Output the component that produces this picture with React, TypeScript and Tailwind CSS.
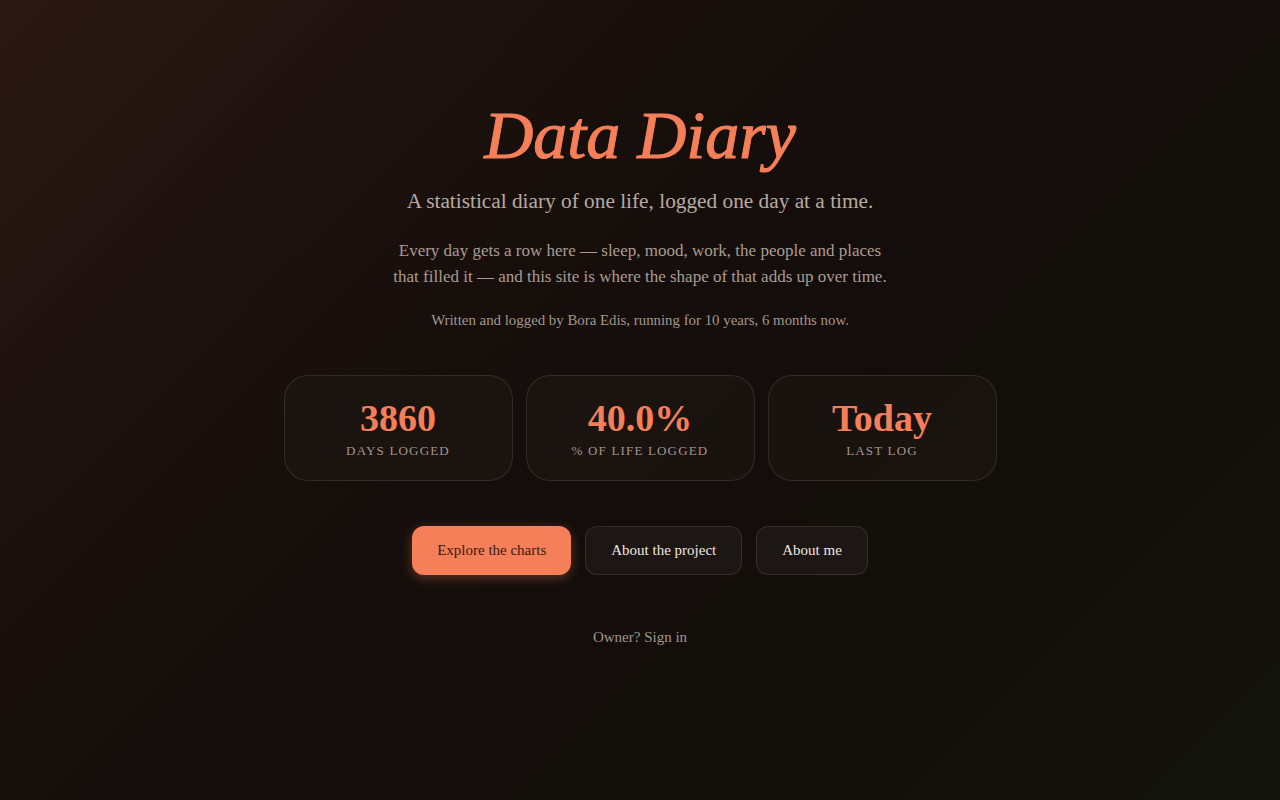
const stats = [
  { value: '3860', label: 'Days logged' },
  { value: '40.0%', label: '% of life logged' },
  { value: 'Today', label: 'Last log' },
]

function StatCard({ value, label }: { value: string; label: string }) {
  return (
    <div className="w-[229px] h-[106px] rounded-3xl border border-white/10 bg-[#1b1512]/80 pt-5 flex flex-col items-center">
      <div className="text-[38px] leading-[44px] font-bold text-[#f47f58]">{value}</div>
      <div className="mt-0.5 text-[13px] leading-[18px] uppercase tracking-[0.09em] text-[#a3958b]">{label}</div>
    </div>
  )
}

export default function App() {
  return (
    <main className="min-h-screen w-full bg-[linear-gradient(135deg,#2a1812_0%,#170f0c_35%,#130d0b_55%,#121009_80%,#13150e_100%)] font-['Liberation_Serif','Times_New_Roman',serif]">
      <section className="flex flex-col items-center pt-[99px] text-center">
        <h1 className="text-[68px] leading-[72px] italic [-webkit-text-stroke:1.1px_#f47f58] text-[#f47f58]">Data Diary</h1>
        <p className="mt-[16px] text-[21.3px] leading-7 text-[#b8aaa0]">
          A statistical diary of one life, logged one day at a time.
        </p>
        <p className="mt-[23px] max-w-[520px] text-[17px] leading-[26px] text-[#aa9c92]">
          Every day gets a row here — sleep, mood, work, the people and places
          <br />
          that filled it — and this site is where the shape of that adds up over time.
        </p>
        <p className="mt-[19px] text-[14.85px] leading-[22px] text-[#a3968c]">
          Written and logged by Bora Edis, running for 10 years, 6 months now.
        </p>

        <div className="mt-[44px] flex gap-[13px]">
          {stats.map((s) => (
            <StatCard key={s.label} value={s.value} label={s.label} />
          ))}
        </div>

        <div className="mt-[45px] flex gap-[14px]">
          <button
            type="button"
            className="h-[49px] px-[25px] rounded-xl bg-[#f47f58] text-[15px] text-[#3b1a0f] shadow-[0_3px_12px_rgba(244,127,88,0.35)]"
          >
            Explore the charts
          </button>
          <button
            type="button"
            className="h-[49px] px-[25px] rounded-xl border border-white/10 bg-[#1c1714] text-[15px] text-[#efe6de]"
          >
            About the project
          </button>
          <button
            type="button"
            className="h-[49px] px-[25px] rounded-xl border border-white/10 bg-[#1c1714] text-[15px] text-[#efe6de]"
          >
            About me
          </button>
        </div>

        <a href="#" className="mt-[51px] text-[15px] leading-[22px] text-[#a3968c]">
          Owner? Sign in
        </a>
      </section>
    </main>
  )
}
